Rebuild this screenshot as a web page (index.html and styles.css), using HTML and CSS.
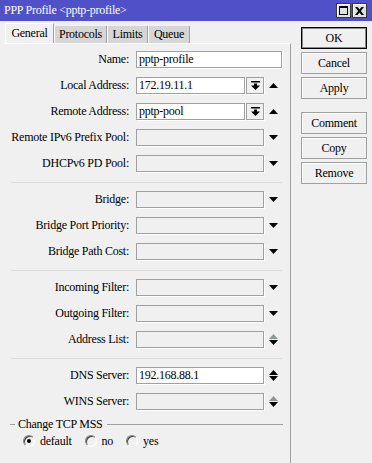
FILE: index.html
```html
<!DOCTYPE html>
<html>
<head>
<meta charset="utf-8">
<link rel="stylesheet" href="styles.css">
</head>
<body>
<div class="window">
  <div class="titlebar">
    <span class="title">PPP Profile &lt;pptp-profile&gt;</span>
    <div class="tb-buttons">
      <span class="tb-btn"><svg width="9" height="9" viewBox="0 0 9 9"><path d="M0 0h9v9H0z M1 2v6h7V2z" fill="#000" fill-rule="evenodd"/></svg></span>
      <span class="tb-btn"><svg width="9" height="8" viewBox="0 0 9 8"><path d="M0 0h2.5L4.5 2.5 6.5 0H9L5.8 4 9 8H6.5L4.5 5.5 2.5 8H0L3.2 4z" fill="#000"/></svg></span>
    </div>
  </div>
  <div class="main">
    <div class="left">
      <div class="tabs">
        <div class="tab active t-general">General</div>
        <div class="tab t-protocols">Protocols</div>
        <div class="tab t-limits">Limits</div>
        <div class="tab t-queue">Queue</div>
      </div>
      <div class="panel">
        <div class="section">
          <div class="row"><span class="lbl">Name:</span><div class="box w-full">pptp-profile</div></div>
          <div class="row"><span class="lbl">Local Address:</span><div class="box w-short">172.19.11.1</div><span class="ddbtn"><svg width="9" height="9" viewBox="0 0 9 9"><path d="M0 0h9v1.5H0z M3 2.5h3v2H3z M0 4.5h9L4.5 9z" fill="#000"/></svg></span><span class="arrow"><svg width="9" height="5" viewBox="0 0 9 5"><path d="M0 5h9L4.5 0z" fill="#000"/></svg></span></div>
          <div class="row"><span class="lbl">Remote Address:</span><div class="box w-short">pptp-pool</div><span class="ddbtn"><svg width="9" height="9" viewBox="0 0 9 9"><path d="M0 0h9v1.5H0z M3 2.5h3v2H3z M0 4.5h9L4.5 9z" fill="#000"/></svg></span><span class="arrow"><svg width="9" height="5" viewBox="0 0 9 5"><path d="M0 5h9L4.5 0z" fill="#000"/></svg></span></div>
          <div class="row"><span class="lbl">Remote IPv6 Prefix Pool:</span><div class="box dis w-dd"></div><span class="arrow"><svg width="9" height="5" viewBox="0 0 9 5"><path d="M0 0h9L4.5 5z" fill="#000"/></svg></span></div>
          <div class="row"><span class="lbl">DHCPv6 PD Pool:</span><div class="box dis w-dd"></div><span class="arrow"><svg width="9" height="5" viewBox="0 0 9 5"><path d="M0 0h9L4.5 5z" fill="#000"/></svg></span></div>
        </div>
        <div class="sep"></div>
        <div class="section">
          <div class="row"><span class="lbl">Bridge:</span><div class="box dis w-dd"></div><span class="arrow"><svg width="9" height="5" viewBox="0 0 9 5"><path d="M0 0h9L4.5 5z" fill="#000"/></svg></span></div>
          <div class="row"><span class="lbl">Bridge Port Priority:</span><div class="box dis w-dd"></div><span class="arrow"><svg width="9" height="5" viewBox="0 0 9 5"><path d="M0 0h9L4.5 5z" fill="#000"/></svg></span></div>
          <div class="row"><span class="lbl">Bridge Path Cost:</span><div class="box dis w-dd"></div><span class="arrow"><svg width="9" height="5" viewBox="0 0 9 5"><path d="M0 0h9L4.5 5z" fill="#000"/></svg></span></div>
        </div>
        <div class="sep"></div>
        <div class="section">
          <div class="row"><span class="lbl">Incoming Filter:</span><div class="box dis w-dd"></div><span class="arrow"><svg width="9" height="5" viewBox="0 0 9 5"><path d="M0 0h9L4.5 5z" fill="#000"/></svg></span></div>
          <div class="row"><span class="lbl">Outgoing Filter:</span><div class="box dis w-dd"></div><span class="arrow"><svg width="9" height="5" viewBox="0 0 9 5"><path d="M0 0h9L4.5 5z" fill="#000"/></svg></span></div>
          <div class="row"><span class="lbl">Address List:</span><div class="box dis w-dd"></div><span class="arrow"><svg width="9" height="11" viewBox="0 0 9 11"><path d="M0 5h9L4.5 0z" fill="#8e978e"/><path d="M0 6h9L4.5 11z" fill="#000"/></svg></span></div>
        </div>
        <div class="sep"></div>
        <div class="section">
          <div class="row"><span class="lbl">DNS Server:</span><div class="box w-dd">192.168.88.1</div><span class="arrow"><svg width="9" height="11" viewBox="0 0 9 11"><path d="M0 5h9L4.5 0z" fill="#000"/><path d="M0 6h9L4.5 11z" fill="#000"/></svg></span></div>
          <div class="row"><span class="lbl">WINS Server:</span><div class="box dis w-dd"></div><span class="arrow"><svg width="9" height="11" viewBox="0 0 9 11"><path d="M0 5h9L4.5 0z" fill="#8e978e"/><path d="M0 6h9L4.5 11z" fill="#000"/></svg></span></div>
        </div>
        <div class="group">
          <div class="group-head"><span class="gl short"></span><span class="gtext">Change TCP MSS</span><span class="gl long"></span></div>
          <div class="radios">
            <span class="ritem"><span class="radio on"></span>default</span>
            <span class="ritem"><span class="radio"></span>no</span>
            <span class="ritem"><span class="radio"></span>yes</span>
          </div>
        </div>
      </div>
    </div>
    <div class="side">
      <div class="btn default">OK</div>
      <div class="btn">Cancel</div>
      <div class="btn">Apply</div>
      <div class="btn spaced">Comment</div>
      <div class="btn">Copy</div>
      <div class="btn">Remove</div>
    </div>
  </div>
</div>
</body>
</html>
```
FILE: styles.css
```css
* { box-sizing: border-box; margin: 0; padding: 0; }
html, body { width: 372px; height: 463px; overflow: hidden; }
body {
  background: #f0f0f0;
  font-family: "Liberation Serif", "Times New Roman", serif;
  font-size: 12px;
  letter-spacing: -0.25px;
  color: #000;
}
.window { width: 372px; height: 463px; }

.titlebar {
  height: 21px;
  background: #5050c8;
  display: flex;
  align-items: center;
  justify-content: space-between;
  padding: 0 5px 0 4px;
  color: #fff;
}
.title { font-size: 12px; line-height: 21px; white-space: nowrap; }
.tb-buttons { display: flex; gap: 1px; }
.tb-btn {
  width: 15px; height: 15px;
  background: #e2e2e2;
  border: 1px solid #3a3a3a;
  box-shadow: inset 1px 1px 0 #fff;
  display: flex; align-items: center; justify-content: center;
}

.main { display: flex; }
.left { width: 287px; margin-left: 4px; }

.tabs { display: flex; align-items: flex-end; height: 22px; padding-left: 1px; }
.tab {
  height: 17px;
  background: #d6d6d6;
  border-left: 1px solid #fff;
  border-right: 1px solid #a0a0a0;
  text-align: center;
  line-height: 17px;
  white-space: nowrap;
}
.tab.active {
  height: 20px;
  background: #f0f0f0;
  border-top: 1px solid #fff;
  line-height: 18px;
}
.t-general { width: 49px; }
.t-protocols { width: 53px; }
.t-limits { width: 41px; }
.t-queue { width: 42px; }

.panel {
  height: 420px;
  border-top: 1px solid #fff;
  border-right: 1px solid #a0a0a0;
  padding-top: 7px;
}
.section { display: flex; flex-direction: column; gap: 9px; }
.sep { height: 1px; background: #dcdcdc; margin: 10px 8px 8px 7px; }

.row { display: flex; align-items: center; height: 17px; }
.lbl {
  width: 126px;
  padding-right: 1px;
  margin-right: 6px;
  text-align: right;
  white-space: nowrap;
}
.box {
  height: 17px;
  border: 1px solid #a0a0a0;
  box-shadow: 1px 1px 0 #fff;
  background: #fff;
  padding: 0 2px;
  line-height: 15px;
  white-space: nowrap;
  overflow: hidden;
}
.box.dis { background: #f0f0f0; }
.w-full { width: 146px; }
.w-dd { width: 128px; }
.w-short { width: 109px; }
.ddbtn {
  width: 18px; height: 17px;
  margin-left: 1px;
  border: 1px solid #a0a0a0;
  box-shadow: 1px 1px 0 #fff;
  background: #f0f0f0;
  display: flex; align-items: center; justify-content: center;
}
.arrow { width: 18px; display: flex; align-items: center; justify-content: center; }
.arrow svg, .ddbtn svg { display: block; }

.group { margin-top: 7px; }
.group-head { display: flex; align-items: center; height: 14px; padding-left: 6px; padding-right: 7px; }
.gl { height: 1px; background: #a0a0a0; }
.gl.short { width: 5px; margin-right: 3px; }
.gl.long { flex: 1; margin-left: 4px; }
.gtext { white-space: nowrap; line-height: 14px; }

.radios { display: flex; align-items: center; gap: 13px; padding-left: 19px; margin-top: 4px; height: 12px; }
.ritem { display: flex; align-items: center; gap: 5px; white-space: nowrap; line-height: 12px; }
.radio {
  width: 12px; height: 12px;
  border-radius: 50%;
  border: 1px solid;
  border-color: #808080 #ffffff #ffffff #808080;
  box-shadow: inset 1px 1px 0 #404040;
  background: #f0f0f0;
  display: flex; align-items: center; justify-content: center;
}
.radio.on::after { content: ""; width: 4px; height: 4px; border-radius: 50%; background: #000; }

.side {
  width: 66px;
  margin-left: 10px;
  padding-top: 6px;
  display: flex;
  flex-direction: column;
  gap: 3px;
}
.btn {
  height: 22px;
  border: 1px solid #a0a0a0;
  box-shadow: inset 1px 1px 0 #fff;
  background: #f0f0f0;
  text-align: center;
  line-height: 20px;
  white-space: nowrap;
}
.btn.default { border-color: #000; box-shadow: inset 0 0 0 1px #8a8a8a; }
.btn.spaced { margin-top: 10px; }
```
